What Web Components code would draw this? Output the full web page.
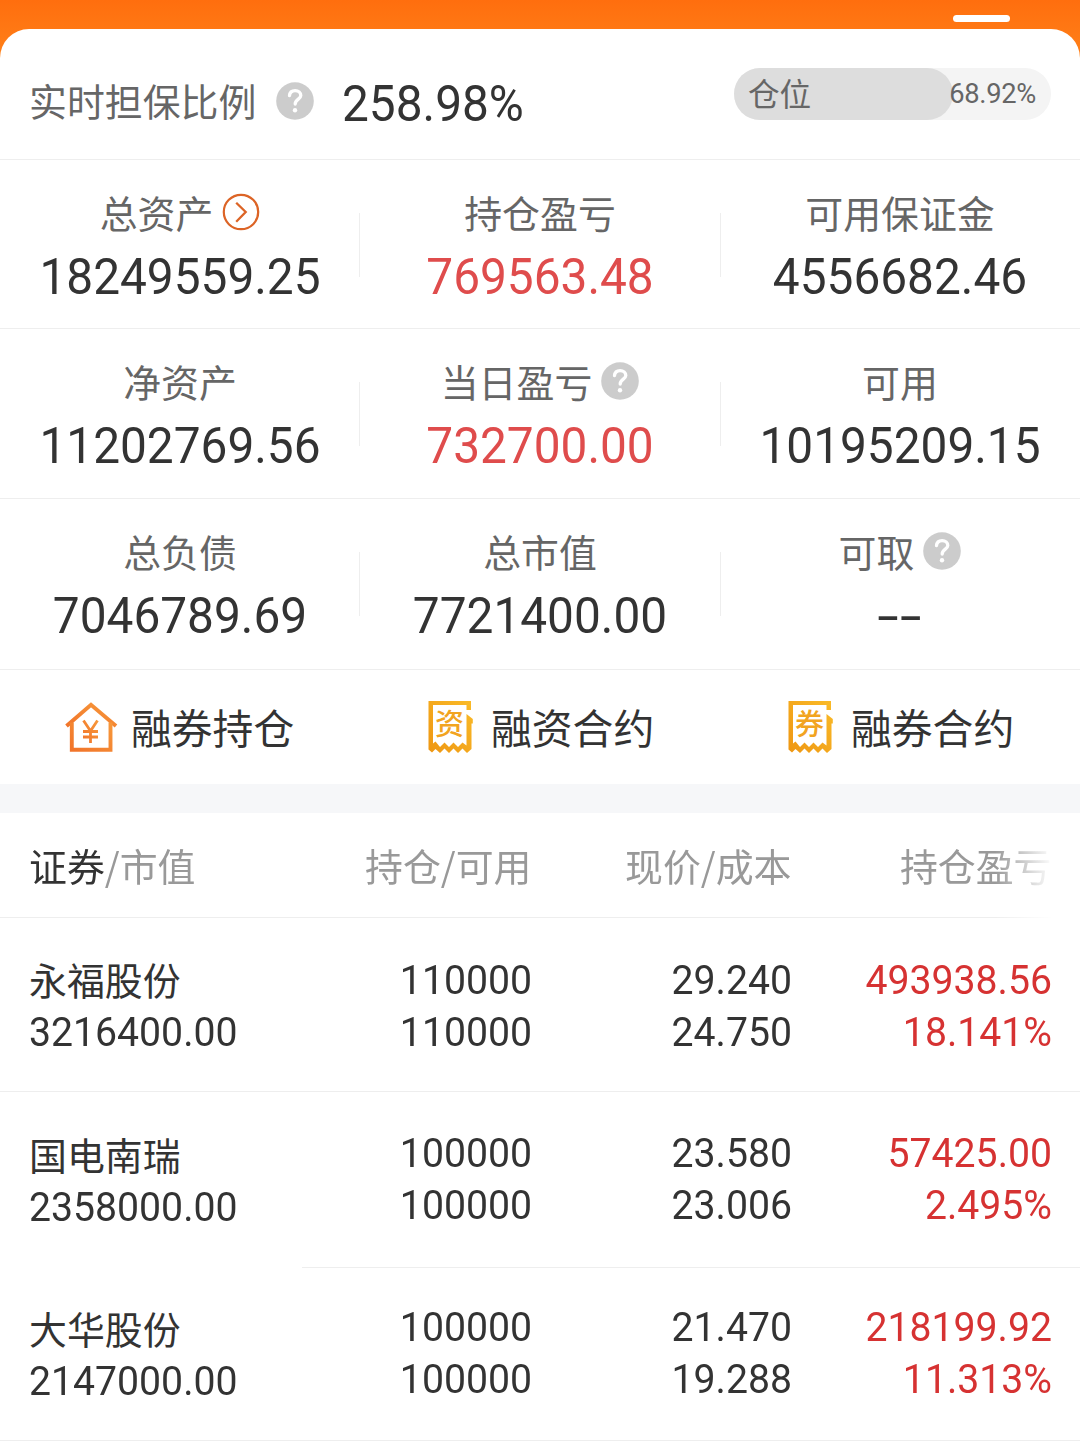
<!DOCTYPE html>
<html lang="zh-CN">
<head>
<meta charset="utf-8">
<title>信用持仓</title>
<style>
html,body{margin:0;padding:0;background:#fff}
body{width:1080px;height:1452px;overflow:hidden;font-family:"Noto Sans CJK SC",sans-serif;color:#333}
</style>
</head>
<body>
<account-page></account-page>
<script>
const define = (name, html) => customElements.define(name, class extends HTMLElement {
  connectedCallback() {
    if (this.shadowRoot) return;
    const t = document.createElement('template');
    t.innerHTML = typeof html === 'function' ? html(this) : html;
    this.attachShadow({mode: 'open'}).append(t.content.cloneNode(true));
  }
});

define('help-icon', `<style>:host{display:block;width:38px;height:38px;flex:none}svg{display:block}</style>
<svg width="38" height="38" viewBox="0 0 38 38"><circle cx="19" cy="19" r="18.800" fill="#ccc"/>
<path d="M13.500 13.600C13.800 10.500 16 8.600 19.100 8.600C22.400 8.600 24.800 10.700 24.800 13.600C24.800 17 19.200 17.400 19.200 22" fill="none" stroke="#fff" stroke-width="3.300" stroke-linecap="round"/>
<circle cx="19" cy="28.300" r="2.200" fill="#fff"/></svg>`);

define('go-icon', `<style>:host{display:block;width:38px;height:38px;flex:none}svg{display:block}</style>
<svg width="38" height="38" viewBox="0 0 38 38" fill="none" stroke="#dc6426"><circle cx="19" cy="19" r="17.200" stroke-width="2.200"/>
<path d="M14.200 9.700L23.700 19L14.200 28.700" stroke-width="2.300"/></svg>`);

define('house-icon', `<style>:host{display:block;width:53px;height:54px}svg{display:block}</style>
<svg width="53" height="54" viewBox="0 0 53 54"><defs><linearGradient id="g" x1="0" y1="1" x2="1" y2="0"><stop offset="0" stop-color="#f1742a"/><stop offset="1" stop-color="#f7983a"/></linearGradient></defs>
<g fill="none" stroke="url(#g)" stroke-width="3.900"><path d="M1.500 26L26 4.800L51 26"/><path d="M6.800 22.500V49.800H45.500V22.500"/>
<path d="M18.500 20.500L25.500 31L32.500 20.500M25.500 30.500V43M18 31.500H33M18 37H33" stroke-width="2.800"/></g></svg>`);

define('bill-icon', el => `<style>:host{display:block;width:53px;height:54px}svg{display:block}text{font:500 29px "Noto Sans CJK SC",sans-serif}</style>
<svg width="53" height="54" viewBox="0 0 53 54"><defs><linearGradient id="g" x1="0" y1="1" x2="1" y2="0"><stop offset="0" stop-color="#ee9612"/><stop offset="1" stop-color="#fabb28"/></linearGradient></defs>
<path fill="url(#g)" d="M3.500 1H46V10H41.500V5H8V43.500L10.500 41.500L15 47L19.500 42.500L24 47L28.500 42.500L33 47L37.500 42.500L41.500 45.500V14L47.800 19V23.500H46.500V49L42 53L37.500 48.500L33 53L28.500 48.500L24 53L19.500 48.500L15 53L10.500 49L7 52.500L3.500 49.500Z"/>
<text x="10" y="34.500" fill="#f2a420">${el.getAttribute('glyph')}</text></svg>`);

define('position-pill', `<style>
:host{display:grid;width:317px;height:52px;border-radius:26px;background:#f4f4f4;color:#666}
.fill,.txt{grid-area:1/1}
.fill{width:219px;border-radius:26px;background:#ddd}
.txt{display:flex;justify-content:space-between;padding:0 15px 0 14px}
.a{font-size:31.600px;line-height:48px}
.b{font:27.300px/52px Roboto,sans-serif;letter-spacing:-.300px}
</style><div class="fill"></div><div class="txt"><span class="a">仓位</span><span class="b">68.92%</span></div>`);

define('summary-bar', `<style>
:host{display:flex;box-sizing:border-box;height:131px;padding:0 29px;border-bottom:1px solid #eee}
.l{font-size:37.900px;line-height:142px;color:#666}
help-icon{margin:53px 0 0 20px}
.v{font:50.300px/149px Roboto,sans-serif;margin-left:27.500px;flex:1;transform:scaleX(.95);transform-origin:left}
position-pill{margin-top:39px}
</style><span class="l">实时担保比例</span><help-icon></help-icon><span class="v">258.98%</span><position-pill></position-pill>`);

define('metric-cell', el => `<style>
:host{display:block;flex:1;position:relative;padding-top:29px}
.l{display:flex;justify-content:center;align-items:center;gap:9px;height:46px;font-size:37.900px;line-height:46px;color:#666}
.v{font:50.300px/64px Roboto,sans-serif;text-align:center;margin-top:10px;color:#333;transform:scaleX(.95)}
:host([tone=red]) .v{color:#df4c4c}
:host([empty]) .v{transform:scaleX(1.540);letter-spacing:.800px}
:host(:not(:last-child))::after{content:"";position:absolute;right:0;top:53px;width:1px;height:64px;background:#eee}
:host(:nth-child(2))::after{right:-1px}
</style><div class="l"><span>${el.getAttribute('label')}</span><slot></slot></div><div class="v">${el.getAttribute('value')}</div>`);

define('metric-row', `<style>:host{display:flex;box-sizing:border-box;border-bottom:1px solid #eee}</style><slot></slot>`);

define('action-link', el => `<style>:host{display:flex;flex:1;padding:30px 0 0 65px;gap:13px}
span{font-size:40.800px;line-height:54px;color:#333}</style><slot></slot><span>${el.getAttribute('label')}</span>`);

define('action-row', `<style>:host{display:flex;height:114px;border-bottom:29px solid #f6f7f9}</style><slot></slot>`);

define('table-head', `<style>
:host{display:grid;grid-template-columns:302px 229.500px 260px 260px;box-sizing:border-box;height:105px;border-bottom:1px solid #eee;font-size:37.900px;line-height:103px;color:#999;
-webkit-mask-image:linear-gradient(90deg,#000 995px,transparent 1053px);mask-image:linear-gradient(90deg,#000 995px,transparent 1053px)}
span{text-align:right;white-space:nowrap}
span:first-of-type{text-align:left;padding-left:29px}
b{font-weight:400;color:#333}
</style><span><b>证券</b>/市值</span><span>持仓/可用</span><span>现价/成本</span><span>持仓盈亏</span>`);

define('holding-row', el => {
  const [name, value, hold, avail, price, cost, gain, rate] = el.getAttribute('data').split('|');
  return `<style>
:host{display:grid;grid-template-columns:302px 230px 260px 260px;box-sizing:border-box;padding-top:var(--top);font:40.700px/52px Roboto,sans-serif;color:#333}
div{text-align:right}
.id{text-align:left;padding-left:29px;margin-top:var(--shift,0)}
p{margin:0;height:52px;transform:scaleX(.963);transform-origin:right}
.id p{transform-origin:left}
.id .n{font:37.900px/49px "Noto Sans CJK SC",sans-serif;transform:none}
.r{color:#d63232}
</style><div class="id"><p class="n">${name}</p><p>${value}</p></div><div><p>${hold}</p><p>${avail}</p></div><div><p>${price}</p><p>${cost}</p></div><div class="r"><p>${gain}</p><p>${rate}</p></div>`;
});

define('account-page', `<style>
:host{display:block;width:1080px;height:1452px;background:linear-gradient(#ff6e0e,#ff8119 58px)}
.top{display:flex;justify-content:flex-end;height:29px}
.tab{width:57px;height:7px;margin:15px 70px 0 0;border-radius:3.500px;background:#fff}
main{height:1423px;border-radius:29px 29px 0 0;background:#fff;overflow:hidden}
hr{border:0;margin:0;height:1px;background:#eee}
.in{margin-left:302px}
</style>
<div class="top"><div class="tab"></div></div>
<main>
<summary-bar></summary-bar>
<metric-row style="height:169px">
<metric-cell label="总资产" value="18249559.25"><go-icon></go-icon></metric-cell>
<metric-cell label="持仓盈亏" value="769563.48" tone="red"></metric-cell>
<metric-cell label="可用保证金" value="4556682.46"></metric-cell>
</metric-row>
<metric-row style="height:170px">
<metric-cell label="净资产" value="11202769.56"></metric-cell>
<metric-cell label="当日盈亏" value="732700.00" tone="red"><help-icon></help-icon></metric-cell>
<metric-cell label="可用" value="10195209.15"></metric-cell>
</metric-row>
<metric-row style="height:171px">
<metric-cell label="总负债" value="7046789.69"></metric-cell>
<metric-cell label="总市值" value="7721400.00"></metric-cell>
<metric-cell label="可取" value="--" empty><help-icon></help-icon></metric-cell>
</metric-row>
<action-row>
<action-link label="融券持仓"><house-icon></house-icon></action-link>
<action-link label="融资合约"><bill-icon glyph="资"></bill-icon></action-link>
<action-link label="融券合约"><bill-icon glyph="券"></bill-icon></action-link>
</action-row>
<table-head></table-head>
<holding-row style="height:173px;--top:36px" data="永福股份|3216400.00|110000|110000|29.240|24.750|493938.56|18.141%"></holding-row>
<hr>
<holding-row style="height:175px;--top:35px;--shift:2px" data="国电南瑞|2358000.00|100000|100000|23.580|23.006|57425.00|2.495%"></holding-row>
<hr class="in">
<holding-row style="height:172px;--top:33px;--shift:2px" data="大华股份|2147000.00|100000|100000|21.470|19.288|218199.92|11.313%"></holding-row>
<hr>
</main>`);
</script>
</body>
</html>
